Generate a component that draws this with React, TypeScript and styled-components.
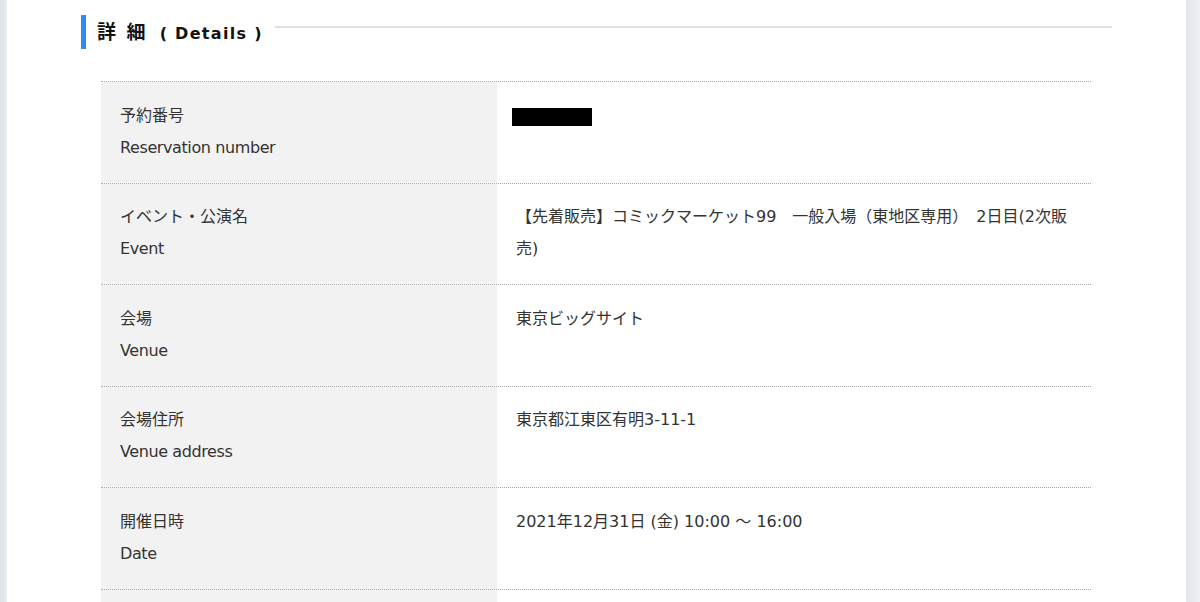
import React from "react";
import styled, { createGlobalStyle } from "styled-components";

const GlobalStyle = createGlobalStyle`
  html, body {
    margin: 0;
    padding: 0;
    height: 100%;
  }
  body {
    background: linear-gradient(to right, #dfe3ea 0, #e8ebf1 7px, #ffffff 7px, #ffffff 1186px, #e3e7ee 1186px, #eceff4 1200px);
    font-family: "DejaVu Sans", "Noto Sans CJK JP", sans-serif;
    color: #333;
  }
`;

const rows = [
  { ja: "予約番号", en: "Reservation number", value: null },
  {
    ja: "イベント・公演名",
    en: "Event",
    value: "【先着販売】コミックマーケット99　一般入場（東地区専用）　2日目(2次販売)",
  },
  { ja: "会場", en: "Venue", value: "東京ビッグサイト" },
  { ja: "会場住所", en: "Venue address", value: "東京都江東区有明3-11-1" },
  { ja: "開催日時", en: "Date", value: "2021年12月31日 (金) 10:00 ～ 16:00" },
  { ja: "", en: "", value: "" },
];

function App() {
  return (
    <>
      <GlobalStyle />
      <Main>
        <Heading>
          <Title>
            詳 細<Sub>( Details )</Sub>
          </Title>
          <Rule />
        </Heading>
        <Table>
          {rows.map((row, i) => (
            <Row key={i}>
              <Label>
                <Line>{row.ja}</Line>
                <Line $en>{row.en}</Line>
              </Label>
              <Value>{row.value === null ? <Masked /> : row.value}</Value>
            </Row>
          ))}
        </Table>
      </Main>
    </>
  );
}

const Main = styled.main`
  margin: 0 14px 0 7px;
  padding-top: 15px;
  height: 602px;
  overflow: hidden;
`;

const Heading = styled.div`
  display: flex;
  align-items: flex-start;
  margin: 0 74px;
  gap: 12px;
`;

const Title = styled.h2`
  margin: 0;
  border-left: 5px solid #2b8cf3;
  padding-left: 11px;
  height: 34px;
  line-height: 34px;
  font-size: 19px;
  letter-spacing: 2px;
  font-weight: 700;
  color: #111;
  white-space: nowrap;
`;

const Sub = styled.span`
  margin-left: 12px;
  font-size: 16px;
  letter-spacing: 1.3px;
`;

const Rule = styled.div`
  flex: 1;
  height: 2px;
  background: #e0e0e0;
  margin-top: 11px;
`;

const Table = styled.div`
  margin: 32px 95px 0 94px;
  border-top: 1px dotted #a8a8a8;
`;

const Row = styled.div`
  display: grid;
  grid-template-columns: 396px 1fr;
  border-bottom: 1px dotted #a8a8a8;
`;

const Label = styled.div`
  background: #f2f2f2;
  padding: 17.5px 19px 19.1px;
`;

const Line = styled.div<{ $en?: boolean }>`
  font-size: 16px;
  line-height: 32px;
  min-height: 32px;
  letter-spacing: ${(p) => (p.$en ? "-0.4px" : "0")};
`;

const Value = styled.div`
  padding: 17.5px 19px 19.1px;
  font-size: 16px;
  line-height: 32px;
`;

const Masked = styled.div`
  width: 80px;
  height: 18px;
  background: #000;
  margin: 8px 0 0 -4px;
`;

export default App;
